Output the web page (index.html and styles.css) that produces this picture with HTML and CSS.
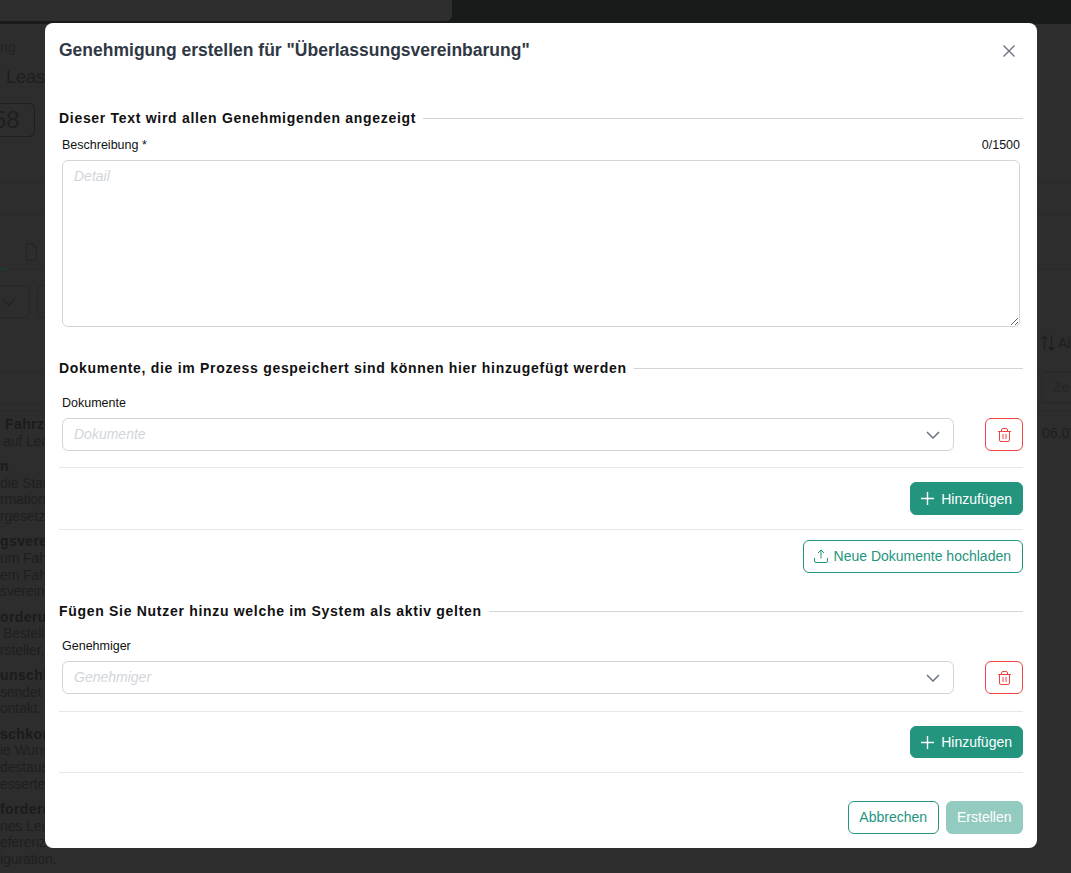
FILE: index.html
```html
<!DOCTYPE html>
<html lang="de">
<head>
<meta charset="utf-8">
<title>Genehmigung erstellen</title>
<link rel="stylesheet" href="styles.css">
</head>
<body>
<div class="page">
  <div class="topbar"><div class="topbar-panel"></div></div>
  <div class="crumb">ng</div>
  <div class="page-title">Leas</div>
  <div class="badge">58</div>
  <div class="rule rule-a"></div>
  <div class="rule rule-b"></div>
  <div class="tabs">
    <svg class="doc-icon" viewBox="0 0 11 18" width="11" height="18" fill="none" stroke="#242424" stroke-width="1"><path d="M.5.5h6.500l3.500 3.500v13.500H.5zM7 .5V4h3.500"/></svg>
    <div class="tab-active"></div>
  </div>
  <div class="toolbar">
    <div class="tool-box"><svg viewBox="0 0 14 8" width="14" height="8" fill="none" stroke="#222" stroke-width="1.2"><path d="M1 1l6 6 6-6"/></svg></div>
    <div class="tool-box second"></div>
  </div>
  <div class="sort-row">
    <svg viewBox="0 0 14 16" width="14" height="16" fill="none" stroke="#1e1e1f" stroke-width="1.2"><path d="M3.500 15.500V1M.5 4l3-3 3 3M10.500.5V15M7.500 12l3 3 3-3"/></svg>
    <span>Al</span>
  </div>
  <div class="filter-row"><div class="filter-box">Ze</div></div>
  <div class="table-body">
    <div class="desc">
      <p><b class="ind-1">Fahrze</b><br><span class="ind-2">auf Leas</span></p>
      <p><b>n</b><br><span>die Star</span><br><span>rmation</span><br><span>rgesetz</span></p>
      <p><b>gsvere</b><br><span>um Fah</span><br><span>em Fahr</span><br><span>sverein</span></p>
      <p><b>orderun</b><br><span class="ind-2">Bestell</span><br><span>rsteller,</span></p>
      <p><b>unschk</b><br><span>sendet s</span><br><span>ontakt.</span></p>
      <p><b>schkor</b><br><span>ie Wuns</span><br><span>destaus</span><br><span>esserte</span></p>
      <p><b>forderr</b><br><span>nes Lea</span><br><span>eferenz</span><br><span>iguration.</span></p>
    </div>
    <div class="date">06.07</div>
  </div>
  <div class="rule"></div>
</div>

<div class="modal" role="dialog">
  <header class="modal-head">
    <h2 class="modal-title">Genehmigung erstellen für "Überlassungsvereinbarung"</h2>
    <svg class="close" viewBox="0 0 14 14" width="14" height="14" fill="none" stroke="#6b7280" stroke-width="1.4"><path d="M1.500 1.500l11 11M12.500 1.500l-11 11"/></svg>
  </header>

  <section class="section s-text">
    <h3 class="sec-head"><span>Dieser Text wird allen Genehmigenden angezeigt</span></h3>
    <div class="field">
      <div class="label-row"><span>Beschreibung *</span><span>0/1500</span></div>
      <textarea class="area" placeholder="Detail"></textarea>
    </div>
  </section>

  <section class="section s-docs">
    <h3 class="sec-head"><span>Dokumente, die im Prozess gespeichert sind können hier hinzugefügt werden</span></h3>
    <div class="field">
      <div class="label-row lr-select"><span>Dokumente</span></div>
      <div class="select-row">
        <div class="select"><span class="select-text">Dokumente</span>
          <svg viewBox="0 0 14 8" width="14" height="8" fill="none" stroke="#6b7280" stroke-width="1.5"><path d="M1 1l6 6 6-6"/></svg>
        </div>
        <button class="btn-del" aria-label="Löschen">
          <svg viewBox="0 0 13 14" width="13" height="14" fill="none" stroke="#ef4444" stroke-width="1"><path d="M0 3.500h13M1.500 3.500v8.500a1.500 1.500 0 0 0 1.500 1.500h7a1.500 1.500 0 0 0 1.500-1.500V3.500M3.500 3.500V2A1.500 1.500 0 0 1 5 .5h3A1.500 1.500 0 0 1 9.500 2v1.500M5 6v5M8 6v5"/></svg>
        </button>
      </div>
    </div>
    <hr class="sep sep-first">
    <div class="actions"><button class="btn solid add"><svg viewBox="0 0 13 13" width="13" height="13" fill="none" stroke="#fff" stroke-width="1.4"><path d="M6.500 0v13M0 6.500h13"/></svg>Hinzufügen</button></div>
    <hr class="sep sep-mid">
    <div class="actions upload-row"><button class="btn outline upload"><svg viewBox="0 0 14 14" width="14" height="14" fill="none" stroke="#23947e" stroke-width="1"><path d="M7 9.500V1M4 4l3-3 3 3M.5 9v3A1.500 1.500 0 0 0 2 13.500h10a1.500 1.500 0 0 0 1.500-1.500V9"/></svg>Neue Dokumente hochladen</button></div>
  </section>

  <section class="section s-users">
    <h3 class="sec-head"><span>Fügen Sie Nutzer hinzu welche im System als aktiv gelten</span></h3>
    <div class="field">
      <div class="label-row lr-select"><span>Genehmiger</span></div>
      <div class="select-row">
        <div class="select"><span class="select-text">Genehmiger</span>
          <svg viewBox="0 0 14 8" width="14" height="8" fill="none" stroke="#6b7280" stroke-width="1.5"><path d="M1 1l6 6 6-6"/></svg>
        </div>
        <button class="btn-del" aria-label="Löschen">
          <svg viewBox="0 0 13 14" width="13" height="14" fill="none" stroke="#ef4444" stroke-width="1"><path d="M0 3.500h13M1.500 3.500v8.500a1.500 1.500 0 0 0 1.500 1.500h7a1.500 1.500 0 0 0 1.500-1.500V3.500M3.500 3.500V2A1.500 1.500 0 0 1 5 .5h3A1.500 1.500 0 0 1 9.500 2v1.500M5 6v5M8 6v5"/></svg>
        </button>
      </div>
    </div>
    <hr class="sep sep-first2">
    <div class="actions"><button class="btn solid add add-short"><svg viewBox="0 0 13 13" width="13" height="13" fill="none" stroke="#fff" stroke-width="1.4"><path d="M6.500 0v13M0 6.500h13"/></svg>Hinzufügen</button></div>
    <hr class="sep sep-last">
  </section>

  <footer class="modal-foot">
    <button class="btn outline foot">Abbrechen</button>
    <button class="btn solid muted foot">Erstellen</button>
  </footer>
</div>
</body>
</html>
```
FILE: styles.css
```css
* { box-sizing: border-box; }
html, body { margin: 0; height: 873px; overflow: hidden; }
body {
  position: relative;
  background: #2d2d2d;
  font-family: "Liberation Sans", Arial, sans-serif;
}

/* dimmed page behind the dialog */
.page { height: 873px; overflow: hidden; color: #1e1e1f; white-space: nowrap; }
.topbar { height: 24px; background: #191b1a; }
.topbar-panel { width: 452px; height: 21px; background: #2e2e2e; border-bottom-right-radius: 6px; }
.crumb { height: 16px; margin-top: 15px; font-size: 14px; line-height: 16px; color: #242424; }
.page-title { height: 24px; margin-top: 10px; padding-left: 6px; font-size: 18px; line-height: 24px; color: #1f1f20; }
.badge {
  width: 35px; height: 34px; margin-top: 14px;
  border: 1px solid #1f1f1f; border-left: 0; border-radius: 0 6px 6px 0;
  font-size: 24px; line-height: 32px; text-indent: -7px; overflow: hidden; color: #1f1f20;
}
.rule { height: 1px; background: #292929; }
.rule-a { margin-top: 45px; }
.rule-b { margin-top: 31px; }
.tabs { height: 55px; position: relative; padding: 28px 0 0 26px; border-bottom: 1px solid #282828; }
.doc-icon { display: block; }
.tab-active { position: absolute; left: 0; bottom: -1px; width: 7px; height: 2px; background: #1d3b31; }
.toolbar { display: flex; gap: 7px; margin-top: 15px; height: 33px; }
.tool-box {
  width: 30px; height: 33px; display: flex; align-items: center; justify-content: center;
  border: 1px solid #272727; border-left: 0; border-radius: 0 6px 6px 0; padding-right: 12px;
}
.tool-box.second { width: 10px; border: 1px solid #272727; border-right: 0; border-radius: 6px 0 0 6px; }
.sort-row { display: flex; align-items: center; gap: 3px; margin-top: 15px; padding-left: 1041px; height: 20px; font-size: 14px; line-height: 20px; color: #1e1e1f; }
.filter-row { height: 33px; margin-top: 18px; padding-left: 1041px; border-top: 1px solid #292929; border-bottom: 1px solid #292929; }
.filter-box { height: 31px; padding-left: 11px; border: 1px solid #282828; border-right: 0; border-radius: 6px 0 0 6px; font-size: 14px; line-height: 29px; color: #262626; }
.table-body { display: flex; justify-content: space-between; margin-top: 6px; padding-top: 5px; border-top: 1px solid #292929; }
.desc { font-size: 14px; line-height: 16.67px; color: #1f1f20; }
.desc p { margin: 0 0 8.6px; }
.desc span { letter-spacing: -.1px; }
.desc b { color: #1b1b1c; letter-spacing: .4px; }
.ind-1 { margin-left: 5px; }
.ind-2 { margin-left: 3px; }
.date { width: 29px; padding-top: 9px; font-size: 14px; line-height: 16px; overflow: hidden; color: #1e1e1f; }

/* dialog */
.modal {
  position: absolute; left: 45px; top: 23px;
  width: 992px; height: 825px; padding: 0 14px;
  background: #fff; border-radius: 8px;
  color: #111;
}
.modal-head { display: flex; justify-content: space-between; align-items: center; height: 55px; }
.modal-title { margin: 0; font-size: 17.5px; font-weight: 700; line-height: 55px; color: #303844; }
.close { margin-right: 7px; }
.section { display: block; }
.s-text { margin-top: 30px; }
.s-docs { margin-top: 31px; }
.s-users { margin-top: 28px; }
.sec-head {
  display: flex; align-items: center; gap: 7px;
  margin: 0; height: 20px; font-size: 14px; font-weight: 700; line-height: 20px;
  letter-spacing: .7px; color: #111; white-space: nowrap;
}
.sec-head::after { content: ""; flex: 1; height: 1px; background: #d1d5db; }
.field { padding-left: 3px; }
.label-row { display: flex; justify-content: space-between; height: 16px; margin: 9px 3px 7px 0; font-size: 12.500px; line-height: 16px; color: #111; }
.lr-select { margin: 17px 3px 7px 0; }
.area {
  display: block; width: 958px; height: 167px; padding: 7px 11px;
  border: 1px solid #d1d5db; border-radius: 6px;
  font: 14px/16px "Liberation Sans", Arial, sans-serif; color: #111;
  outline: 0; resize: vertical;
}
.area::placeholder { color: #d1d5db; font-style: italic; opacity: 1; }
.select-row { display: flex; justify-content: space-between; }
.select {
  display: flex; align-items: center; justify-content: space-between;
  width: 892px; height: 33px; padding: 0 13px 0 11px;
  border: 1px solid #d1d5db; border-radius: 6px;
  font-size: 14px; font-style: italic; color: #d1d5db;
}
.select-text { margin-bottom: 2px; }
.btn-del {
  display: flex; align-items: center; justify-content: center;
  width: 38px; height: 33px; padding: 0;
  background: #fff; border: 1px solid #ef4444; border-radius: 6px;
}
.sep { margin: 0; border: 0; height: 1px; background: #e5e7eb; }
.sep-first { margin-top: 16px; }
.sep-first2 { margin-top: 17px; }
.actions { display: flex; justify-content: flex-end; margin-top: 14px; }
.upload-row { margin-top: 10px; }
.sep-mid { margin-top: 14px; }
.sep-last { margin-top: 14px; }
.btn {
  display: inline-flex; align-items: center; justify-content: center; gap: 6px;
  height: 33px; padding: 0 11px; border-radius: 6px;
  font: 14px/16px "Liberation Sans", Arial, sans-serif; white-space: nowrap;
}
.btn.add { gap: 7px; padding: 0 10px; }
.btn.add-short { height: 32px; }
.btn.upload { padding: 0 11px 2px 10px; }
.btn.foot { padding: 0 10.5px 2px; }
.solid { background: #23947e; border: 1px solid #23947e; color: #fff; }
.outline { background: #fff; border: 1px solid #23947e; color: #23947e; }
.muted { background: #94cbc0; border-color: #94cbc0; }
.modal-foot { display: flex; justify-content: flex-end; gap: 7px; margin-top: 28px; }
```
